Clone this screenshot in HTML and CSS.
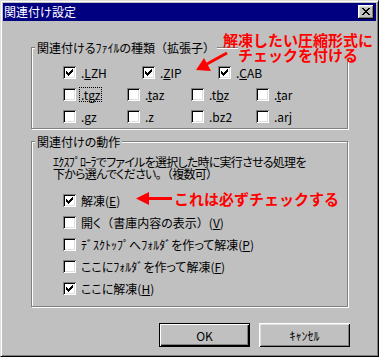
FILE: index.html
```html
<!DOCTYPE html>
<html lang="ja">
<head>
<meta charset="utf-8">
<title>関連付け設定</title>
<link rel="stylesheet" href="styles.css">
</head>
<body>
<div class="window">
  <div class="titlebar">
    <span class="title">関連付け設定</span>
    <span class="close"><svg width="8" height="7" viewBox="0 0 8 7" shape-rendering="crispEdges"><path d="M0 0h2v1h-2z M6 0h2v1h-2z M1 1h2v1h-2z M5 1h2v1h-2z M2 2h4v1h-4z M3 3h2v1h-2z M2 4h4v1h-4z M1 5h2v1h-2z M5 5h2v1h-2z M0 6h2v1h-2z M6 6h2v1h-2z" fill="#000"/></svg></span>
  </div>
  <div class="content">
    <div class="group g1">
      <div class="legend">関連付けるﾌｧｲﾙの種類<span class="fw">（</span>拡張子<span class="fw">）</span></div>
      <div class="rows">
        <div class="row r1">
          <div class="cb"><span class="box"><svg class="check" width="7" height="7" viewBox="0 0 7 7" shape-rendering="crispEdges"><polygon points="0,2 1,2 1,3 2,3 2,4 3,4 3,3 4,3 4,2 5,2 5,1 6,1 6,0 7,0 7,3 6,3 6,4 5,4 5,5 4,5 4,6 3,6 3,7 2,7 2,6 1,6 1,5 0,5"/></svg></span><span class="lbl">.<u>L</u>ZH</span></div>
          <div class="cb"><span class="box"><svg class="check" width="7" height="7" viewBox="0 0 7 7" shape-rendering="crispEdges"><polygon points="0,2 1,2 1,3 2,3 2,4 3,4 3,3 4,3 4,2 5,2 5,1 6,1 6,0 7,0 7,3 6,3 6,4 5,4 5,5 4,5 4,6 3,6 3,7 2,7 2,6 1,6 1,5 0,5"/></svg></span><span class="lbl">.<u>Z</u>IP</span></div>
          <div class="cb"><span class="box"><svg class="check" width="7" height="7" viewBox="0 0 7 7" shape-rendering="crispEdges"><polygon points="0,2 1,2 1,3 2,3 2,4 3,4 3,3 4,3 4,2 5,2 5,1 6,1 6,0 7,0 7,3 6,3 6,4 5,4 5,5 4,5 4,6 3,6 3,7 2,7 2,6 1,6 1,5 0,5"/></svg></span><span class="lbl">.<u>C</u>AB</span></div>
        </div>
        <div class="row r2">
          <div class="cb"><span class="box"></span><span class="lbl focus">.t<u>g</u>z</span></div>
          <div class="cb"><span class="box"></span><span class="lbl">.<u>t</u>az</span></div>
          <div class="cb"><span class="box"></span><span class="lbl">.t<u>b</u>z</span></div>
          <div class="cb"><span class="box"></span><span class="lbl">.<u>t</u>ar</span></div>
        </div>
        <div class="row r2">
          <div class="cb"><span class="box"></span><span class="lbl">.gz</span></div>
          <div class="cb"><span class="box"></span><span class="lbl">.z</span></div>
          <div class="cb"><span class="box"></span><span class="lbl">.bz2</span></div>
          <div class="cb"><span class="box"></span><span class="lbl">.arj</span></div>
        </div>
      </div>
    </div>
    <div class="group g2">
      <div class="legend">関連付けの動作</div>
      <p class="desc">ｴｸｽﾌﾟﾛｰﾗでファイルを選択した時に実行させる処理を<br>下から選んでください<span class="fw">。（</span>複数可<span class="fw">）</span></p>
      <div class="list">
        <div class="cb"><span class="box"><svg class="check" width="7" height="7" viewBox="0 0 7 7" shape-rendering="crispEdges"><polygon points="0,2 1,2 1,3 2,3 2,4 3,4 3,3 4,3 4,2 5,2 5,1 6,1 6,0 7,0 7,3 6,3 6,4 5,4 5,5 4,5 4,6 3,6 3,7 2,7 2,6 1,6 1,5 0,5"/></svg></span><span class="lbl">解凍(<u>E</u>)</span></div>
        <div class="cb"><span class="box"></span><span class="lbl">開く<span class="fw">（</span>書庫内容の表示<span class="fw">）</span>(<u>V</u>)</span></div>
        <div class="cb"><span class="box"></span><span class="lbl">ﾃﾞｽｸﾄｯﾌﾟへﾌｫﾙﾀﾞを作って解凍(<u>P</u>)</span></div>
        <div class="cb"><span class="box"></span><span class="lbl">ここにﾌｫﾙﾀﾞを作って解凍(<u>F</u>)</span></div>
        <div class="cb"><span class="box"><svg class="check" width="7" height="7" viewBox="0 0 7 7" shape-rendering="crispEdges"><polygon points="0,2 1,2 1,3 2,3 2,4 3,4 3,3 4,3 4,2 5,2 5,1 6,1 6,0 7,0 7,3 6,3 6,4 5,4 5,5 4,5 4,6 3,6 3,7 2,7 2,6 1,6 1,5 0,5"/></svg></span><span class="lbl">ここに解凍(<u>H</u>)</span></div>
      </div>
    </div>
    <div class="buttons">
      <button class="btn default">OK</button>
      <button class="btn">ｷｬﾝｾﾙ</button>
    </div>
  </div>

  <div class="note note1">
    <div class="nl">解凍したい圧縮形式に</div>
    <div class="nl">チェックを付ける</div>
  </div>
  <svg class="arrow1" width="40" height="26" viewBox="0 0 40 26">
    <line x1="36" y1="4" x2="15" y2="15.5" stroke="#f00" stroke-width="3"/>
    <polygon points="5,21 13,9 20,22" fill="#f00"/>
  </svg>
  <div class="note note2">
    <svg class="arrow2" width="36" height="13" viewBox="0 0 36 13">
      <polygon points="0,6.5 13,0 13,13" fill="#f00"/>
      <rect x="12" y="5" width="24" height="3" fill="#f00"/>
    </svg>
    <span>これは必ずチェックする</span>
  </div>
</div>
</body>
</html>
```

FILE: styles.css
```css
* { box-sizing: border-box; }
html, body { margin: 0; padding: 0; }
body {
  width: 379px;
  height: 357px;
  overflow: hidden;
  background: #c0c0c0;
  font-family: "Noto Sans CJK JP", "Noto Sans", sans-serif;
  font-size: 12px;
  color: #000;
}
.window {
  position: relative;
  width: 379px;
  height: 357px;
  background: #c0c0c0;
  border: 1px solid;
  border-color: #dfdfdf #000 #000 #dfdfdf;
  box-shadow: inset 1px 1px #fff, inset -1px -1px #808080;
  padding: 2px;
}
.titlebar {
  height: 18px;
  background: #000080;
  color: #fff;
  display: flex;
  align-items: center;
  justify-content: space-between;
  padding: 0 2px 0 1px;
}
.title { line-height: 12px; }
.close {
  width: 16px;
  height: 14px;
  background: #c0c0c0;
  box-shadow: inset -1px -1px #000, inset 1px 1px #fff, inset -2px -2px #808080, inset 2px 2px #dfdfdf;
  display: flex;
  align-items: center;
  justify-content: center;
  padding-bottom: 1px;
}
.close svg { display: block; }
.content {
  padding: 26px 26px 0 28px;
  font-feature-settings: "palt";
}
.fw { font-feature-settings: normal; }
.group {
  width: 317px;
  border: 1px solid #808080;
  box-shadow: inset 1px 1px #fff, 1px 1px #fff;
}
.legend {
  width: fit-content;
  height: 13px;
  line-height: 13px;
  margin: -7px 0 0 3px;
  padding: 0 2px;
  background: #c0c0c0;
  white-space: nowrap;
}
.g1 { padding-bottom: 5px; }
.rows {
  margin-top: 12px;
  padding-left: 31px;
  display: flex;
  flex-direction: column;
  gap: 9px;
}
.row { display: grid; height: 13px; }
.r1 { grid-template-columns: 79px 76px auto; }
.r2 { grid-template-columns: 64px 64px 65px auto; }
.cb {
  display: flex;
  align-items: center;
  gap: 5px;
  height: 13px;
  line-height: 13px;
  white-space: nowrap;
}
.box {
  flex-shrink: 0;
  width: 13px;
  height: 13px;
  background: #fff;
  box-shadow: inset 1px 1px #808080, inset -1px -1px #fff, inset 2px 2px #000, inset -2px -2px #dfdfdf;
  padding: 3px;
}
.check { display: block; fill: #000; }
.lbl u { text-decoration: underline; text-underline-offset: 1px; }
.focus { outline: 1px dotted #000; outline-offset: 0; padding: 0 1px; margin-left: -1px; }
.g2 { margin-top: 12px; padding-bottom: 11px; }
.desc {
  margin: 8px 0 0 21px;
  line-height: 12px;
  letter-spacing: -0.75px;
  white-space: nowrap;
}
.list {
  margin-top: 14px;
  padding-left: 31px;
  display: flex;
  flex-direction: column;
  gap: 9px;
}
.buttons {
  display: flex;
  justify-content: flex-end;
  gap: 9px;
  margin-top: 16px;
}
.btn {
  width: 91px;
  height: 24px;
  padding: 0;
  border: 0;
  background: #c0c0c0;
  font: inherit;
  font-size: 12px;
  color: #000;
  box-shadow: inset 1px 1px #fff, inset -1px -1px #000, inset 2px 2px #dfdfdf, inset -2px -2px #808080;
}
.btn.default {
  border: 1px solid #000;
  box-shadow: inset 1px 1px #fff, inset -1px -1px #000, inset -2px -2px #808080;
}
.note {
  position: absolute;
  color: #f00;
  font-weight: 700;
  font-size: 15px;
  line-height: 15px;
  white-space: nowrap;
}
.note1 {
  left: 222px;
  top: 31px;
  width: 150px;
}
.nl {
  width: fit-content;
  margin: 0 auto;
  background: #c0c0c0;
}
.arrow1 {
  position: absolute;
  left: 190px;
  top: 48px;
}
.note2 {
  left: 135px;
  top: 190px;
  display: flex;
  align-items: center;
  gap: 2px;
}
.arrow2 { display: block; }
```
